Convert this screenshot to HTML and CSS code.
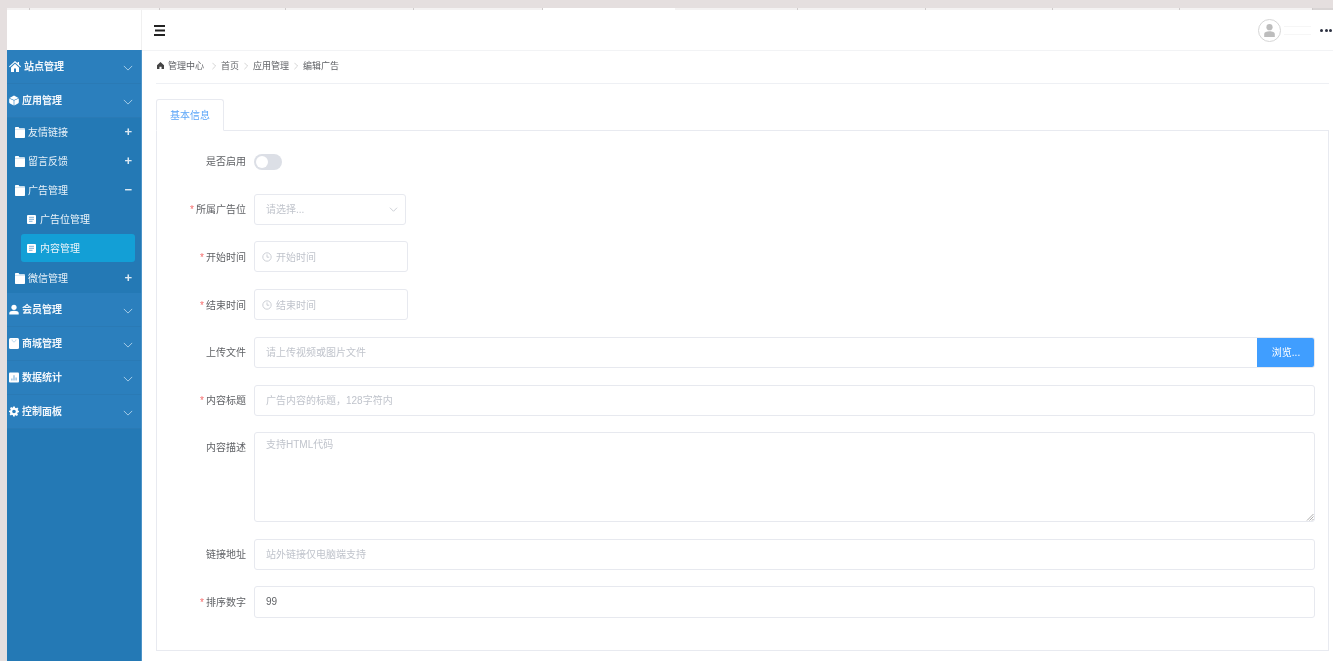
FILE: index.html
```html
<!DOCTYPE html>
<html lang="zh-CN">
<head>
<meta charset="utf-8">
<title>编辑广告</title>
<link rel="stylesheet" href="styles.css">
</head>
<body>
<svg class="defs" width="0" height="0" aria-hidden="true">
  <symbol id="i-chev" viewBox="0 0 12 7"><path d="M1 1l5 5 5-5" fill="none" stroke="currentColor" stroke-width="1.200"/></symbol>
  <symbol id="i-folder" viewBox="0 0 10 11"><path d="M0 1C0 .4.4 0 1 0h2.600l.8 1.300H9c.6 0 1 .4 1 1V10c0 .6-.4 1-1 1H1c-.6 0-1-.4-1-1z" fill="#fff"/><path d="M0 2.400h10" stroke="#8fbcdc" stroke-width=".4"/></symbol>
  <symbol id="i-doc" viewBox="0 0 9 9"><rect width="9" height="9" rx="1" fill="#fff"/><path d="M2 2.300h5M2 4.300h5M2 6.300h3.500" stroke="#6ea8d2" stroke-width=".9"/></symbol>
  <symbol id="i-clock" viewBox="0 0 10 10"><circle cx="5" cy="5" r="4.200" fill="none" stroke="currentColor" stroke-width=".8"/><path d="M5 2.400V5.200H7.200" fill="none" stroke="currentColor" stroke-width=".8"/></symbol>
</svg>

<div class="tabstrip">
  <span class="strip-tab s0"></span><span class="strip-tab s1"></span><span class="strip-tab s2"></span><span class="strip-tab s3"></span>
  <span class="strip-tab s4"></span><span class="strip-tab strip-active"></span><span class="strip-tab s6"></span>
  <span class="strip-tab s7"></span><span class="strip-tab s8"></span><span class="strip-tab s9"></span>
  <span class="strip-tab s10"></span><span class="strip-tab s11"></span>
</div>

<div class="app">
  <aside class="sidebar">
    <div class="logo"></div>
    <nav class="menu">
      <a class="top-item">
        <svg class="top-icon home-icon" viewBox="0 0 12 11"><path d="M6 0L0 5.400l.7.8L6 1.500l5.300 4.700.7-.8-2-1.800V1H8.600v1.200zM2 6.400V11h3V7.600h2V11h3V6.400L6 2.800z" fill="#fff"/></svg>
        <span class="top-label">站点管理</span>
        <svg class="chev"><use href="#i-chev"/></svg>
      </a>
      <a class="top-item">
        <svg class="top-icon" viewBox="0 0 10 10"><path d="M5 0l4.500 2.400L5 4.600.5 2.400zM.2 3l4.500 2.100V10L1 8c-.5-.3-.8-.6-.8-1.200zM9.800 3L5.300 5.100V10L9 8c.5-.3.8-.6.8-1.200z" fill="#fff"/></svg>
        <span class="top-label">应用管理</span>
        <svg class="chev"><use href="#i-chev"/></svg>
      </a>
      <div class="submenu">
        <a class="sub-item"><svg class="folder"><use href="#i-folder"/></svg><span class="sub-label">友情链接</span><span class="sign">+</span></a>
        <a class="sub-item"><svg class="folder"><use href="#i-folder"/></svg><span class="sub-label">留言反馈</span><span class="sign">+</span></a>
        <a class="sub-item"><svg class="folder"><use href="#i-folder"/></svg><span class="sub-label">广告管理</span><span class="sign">−</span></a>
        <a class="leaf-item"><svg class="doc"><use href="#i-doc"/></svg><span class="leaf-label">广告位管理</span></a>
        <a class="leaf-item current"><svg class="doc"><use href="#i-doc"/></svg><span class="leaf-label">内容管理</span></a>
        <a class="sub-item"><svg class="folder"><use href="#i-folder"/></svg><span class="sub-label">微信管理</span><span class="sign">+</span></a>
      </div>
      <a class="top-item">
        <svg class="top-icon" viewBox="0 0 10 10"><circle cx="5" cy="2.800" r="2.600" fill="#fff"/><path d="M.3 10V8.400c0-1.400 1.900-2.200 4.700-2.200s4.700.8 4.700 2.200V10z" fill="#fff"/></svg>
        <span class="top-label">会员管理</span>
        <svg class="chev"><use href="#i-chev"/></svg>
      </a>
      <a class="top-item">
        <svg class="top-icon" viewBox="0 0 10 11"><rect width="10" height="11" rx="1.500" fill="#fff"/><path d="M3 1.500c.3 1.600 1 2.300 2 2.300s1.700-.7 2-2.300" fill="none" stroke="#9cc4e2" stroke-width=".7"/></svg>
        <span class="top-label">商城管理</span>
        <svg class="chev"><use href="#i-chev"/></svg>
      </a>
      <a class="top-item">
        <svg class="top-icon" viewBox="0 0 10 10"><rect width="10" height="10" rx="1" fill="#fff"/><path d="M2.300 6h1.200v2H2.300zM4.400 2.800h1.200V8H4.400zM6.500 5h1.200v3H6.500z" fill="#86b7dc"/></svg>
        <span class="top-label">数据统计</span>
        <svg class="chev"><use href="#i-chev"/></svg>
      </a>
      <a class="top-item">
        <svg class="top-icon" viewBox="0 0 12 12"><path d="M5 0h2l.3 1.600 1.200.5L9.900 1.200l1.400 1.400-.9 1.400.5 1.200L12 5v2l-1.600.3-.5 1.200.9 1.400-1.400 1.400-1.400-.9-1.200.5L7 12H5l-.3-1.600-1.200-.5-1.400.9L.7 9.400l.9-1.400-.5-1.200L0 6.500V5l1.600-.3.500-1.200-.9-1.400L2.600.7 4 1.600l.7-.3zM6 3.800a2.200 2.200 0 100 4.400 2.200 2.200 0 000-4.400z" fill="#fff" fill-rule="evenodd"/></svg>
        <span class="top-label">控制面板</span>
        <svg class="chev"><use href="#i-chev"/></svg>
      </a>
    </nav>
  </aside>

  <div class="main">
    <header class="topbar">
      <svg class="hamburger" viewBox="0 0 11 11"><path d="M0 1h11M1 5.500h10M0 10h11" stroke="#222" stroke-width="1.800"/></svg>
      <div class="userbox">
        <span class="avatar"><svg viewBox="0 0 11 13"><circle cx="5.500" cy="3.200" r="3.100" fill="#bdbdbd"/><path d="M.2 13v-3c0-1.800 2.200-2.800 5.300-2.800s5.300 1 5.300 2.800v3z" fill="#bdbdbd"/></svg></span>
        <span class="username"></span>
        <span class="dots"><i></i><i></i><i></i></span>
      </div>
    </header>

    <div class="content">
      <div class="breadcrumb">
        <svg class="home" viewBox="0 0 8 8"><path d="M4 0L0 3.800V8h2.800V5.400h2.400V8H8V3.800z" fill="#444"/></svg>
        <span>管理中心</span><svg class="crumb-sep first" viewBox="0 0 5 9"><path d="M.5.500l4 4-4 4" fill="none" stroke="#bbb" stroke-width=".8"/></svg>
        <span>首页</span><svg class="crumb-sep" viewBox="0 0 5 9"><path d="M.5.500l4 4-4 4" fill="none" stroke="#bbb" stroke-width=".8"/></svg>
        <span>应用管理</span><svg class="crumb-sep" viewBox="0 0 5 9"><path d="M.5.500l4 4-4 4" fill="none" stroke="#bbb" stroke-width=".8"/></svg>
        <span>编辑广告</span>
      </div>

      <div class="tabs"><div class="tab">基本信息</div></div>

      <form class="panel">
        <div class="row row-switch">
          <label class="lbl">是否启用</label>
          <span class="switch"><i></i></span>
        </div>
        <div class="row row-select">
          <label class="lbl"><b>*</b>所属广告位</label>
          <div class="field select"><span class="ph">请选择...</span><svg class="select-chev"><use href="#i-chev"/></svg></div>
        </div>
        <div class="row row-date">
          <label class="lbl"><b>*</b>开始时间</label>
          <div class="field date"><svg class="clock"><use href="#i-clock"/></svg><span class="ph">开始时间</span></div>
        </div>
        <div class="row row-date">
          <label class="lbl"><b>*</b>结束时间</label>
          <div class="field date"><svg class="clock"><use href="#i-clock"/></svg><span class="ph">结束时间</span></div>
        </div>
        <div class="row row-file">
          <label class="lbl">上传文件</label>
          <div class="field wide file"><span class="ph">请上传视频或图片文件</span><span class="browse">浏览...</span></div>
        </div>
        <div class="row row-title">
          <label class="lbl"><b>*</b>内容标题</label>
          <div class="field wide"><span class="ph">广告内容的标题，128字符内</span></div>
        </div>
        <div class="row row-area">
          <label class="lbl area-lbl">内容描述</label>
          <div class="field wide area"><span class="ph">支持HTML代码</span>
            <svg class="grip" viewBox="0 0 8 8"><path d="M7.500 1L1 7.500M7.500 3.500L3.500 7.500M7.500 6L6 7.500" stroke="#888" stroke-width=".7"/></svg>
          </div>
        </div>
        <div class="row row-link">
          <label class="lbl">链接地址</label>
          <div class="field wide"><span class="ph">站外链接仅电脑端支持</span></div>
        </div>
        <div class="row row-sort">
          <label class="lbl"><b>*</b>排序数字</label>
          <div class="field wide sort"><span class="val">99</span></div>
        </div>
      </form>
    </div>
  </div>
</div>
</body>
</html>
```
FILE: styles.css
```css
* { box-sizing: border-box; }
html, body { margin: 0; padding: 0; height: 100%; overflow: hidden; }
body {
  background: #e5dfdf;
  font-family: "Liberation Sans", "Noto Sans CJK SC", sans-serif;
  font-size: 10px;
  color: #606266;
  display: flex;
  flex-direction: column;
}
.defs { position: absolute; }

/* strip of browser tabs at the very top */
.tabstrip { height: 10px; flex: none; display: flex; align-items: flex-end; padding-left: 7px; }
.strip-tab { height: 2px; background: #f4f2f2; border-right: 1px solid #cfcbcb; flex: none; }
.s0 { width: 23px; }
.s1 { width: 130px; }
.s2 { width: 126px; }
.s3 { width: 128px; }
.s4 { width: 129px; }
.strip-active { width: 132px; background: #fff; border-right: 0; }
.s6 { width: 123px; }
.s7 { width: 128px; }
.s8 { width: 127px; }
.s9 { width: 127px; }
.s10 { width: 133px; }
.s11 { flex: 1; background: #d9d5d5; border-right: 0; }

.app { flex: 1; min-height: 0; display: flex; margin-left: 7px; filter: blur(.5px); }

/* sidebar */
.sidebar { width: 135px; flex: none; display: flex; flex-direction: column; background: #2479b5; }
.logo { height: 40px; flex: none; background: #fff; border-right: 1px solid #f0f0f0; }
.menu { flex: 1; display: flex; flex-direction: column; color: #fff; border-right: 1px solid #4d94c8; }
.top-item { height: 34px; flex: none; display: flex; align-items: center; padding: 0 8px 0 2px; background: #2b7fbd; border-bottom: 1px solid #2a7ab5; font-weight: 700; color: #f1f6fb; }
.top-icon { width: 10px; height: 11px; flex: none; }
.top-icon.home-icon { width: 12px; }
.top-label { margin-left: 3px; flex: 1; padding-bottom: 2px; }
.chev { width: 10px; height: 6px; color: #a3cbe7; flex: none; margin-top: 3px; }
.submenu { display: flex; flex-direction: column; background: #2479b5; }
.sub-item { height: 29px; flex: none; display: flex; align-items: center; padding: 0 9px 0 8px; color: #e9f2f9; }
.folder { width: 10px; height: 11px; flex: none; }
.sub-label { margin-left: 3px; flex: 1; padding-bottom: 2px; }
.sign { font-size: 13px; line-height: 1; font-weight: 700; color: #dce9f3; padding-bottom: 2px; }
.leaf-item { height: 28px; flex: none; display: flex; align-items: center; gap: 4px; margin: 0 6px 1px 14px; padding-left: 6px; border-radius: 3px; color: #eef5fa; }
.leaf-item.current { background: #139fd6; margin-bottom: 2px; }
.leaf-label { padding-bottom: 2px; }
.doc { width: 9px; height: 9px; flex: none; }

/* top bar */
.main { flex: 1; min-width: 0; display: flex; flex-direction: column; background: #fff; }
.topbar { height: 41px; flex: none; display: flex; align-items: center; justify-content: space-between; padding: 0 1px 0 12px; border-bottom: 1px solid #f2f3f5; }
.hamburger { width: 11px; height: 11px; }
.userbox { display: flex; align-items: center; }
.avatar { width: 23px; height: 23px; border: 1px solid #d6d6d6; border-radius: 50%; display: flex; align-items: center; justify-content: center; }
.avatar svg { width: 11px; height: 13px; }
.username { width: 27px; margin-left: 3px; margin-right: 9px; height: 9px; border-top: 1px solid #f6f6f6; border-bottom: 1px solid #f6f6f6; }
.dots { display: flex; gap: 1.500px; }
.dots i { width: 3px; height: 3px; border-radius: 50%; background: #2c3140; }

/* content */
.content { flex: 1; min-height: 0; padding: 0 4px 0 14px; display: flex; flex-direction: column; }
.breadcrumb { height: 33px; flex: none; display: flex; align-items: center; padding: 0 0 3px 1px; border-bottom: 1px solid #eef0f4; font-size: 9px; color: #606266; }
.home { width: 7px; height: 7px; margin-right: 4px; }
.crumb-sep { width: 4px; height: 8px; margin: 0 5px; }
.crumb-sep.first { margin-left: 8px; }
.tabs { margin-top: 15px; height: 32px; flex: none; display: flex; margin-bottom: -1px; position: relative; z-index: 1; }
.tab { width: 68px; height: 32px; padding-bottom: 2px; background: #fff; border: 1px solid #e8eaf0; border-bottom-color: #fff; border-radius: 3px 3px 0 0; display: flex; align-items: center; justify-content: center; color: #5aa5f8; }

.panel { height: 521px; flex: none; border: 1px solid #e8eaf0; padding: 0 13px 0 0; display: flex; flex-direction: column; }
.row { display: flex; align-items: center; flex: none; }
.lbl { width: 89px; margin-right: 8px; padding-bottom: 2px; flex: none; text-align: right; color: #606266; }
.lbl b { color: #f56c6c; font-weight: 400; margin-right: 2px; }
.row-switch { margin-top: 23px; height: 16px; }
.row-switch .lbl { padding-bottom: 4px; }
.row-select { margin-top: 24px; }
.row-date { margin-top: 16px; }
.row-date .lbl { padding-bottom: 0; }
.row-date + .row-date { margin-top: 17px; }
.row-file { margin-top: 17px; }
.row-title { margin-top: 17px; }
.row-area { margin-top: 16px; align-items: flex-start; }
.row-link { margin-top: 17px; }
.row-sort { margin-top: 16px; }
.area-lbl { padding-top: 7px; }

.switch { width: 28px; height: 16px; border-radius: 8px; background: #dcdfe6; padding: 2px; display: flex; }
.switch i { width: 12px; height: 12px; border-radius: 50%; background: #fff; }

.field { height: 31px; border: 1px solid #e7e9ef; border-radius: 3px; background: #fff; display: flex; align-items: center; padding: 0 11px; }
.select { width: 152px; justify-content: space-between; padding-right: 7px; }
.select-chev { width: 9px; height: 5px; color: #c4c8cf; }
.date { width: 154px; padding-left: 7px; gap: 4px; }
.date .ph { padding-bottom: 0; }
.clock { width: 10px; height: 10px; color: #c0c4cc; flex: none; }
.wide { flex: 1; min-width: 0; }
.ph, .val { padding-bottom: 2px; }
.ph { color: #c0c4cc; }
.val { color: #606266; }
.file { padding-right: 0; justify-content: space-between; overflow: hidden; }
.browse { width: 58px; height: 31px; padding-bottom: 2px; margin-right: -1px; background: #409eff; color: #fff; display: flex; align-items: center; justify-content: center; border-radius: 0 3px 3px 0; flex: none; }
.area { height: 90px; align-items: flex-start; padding-top: 3px; position: relative; }
.grip { position: absolute; right: 0; bottom: 0; width: 8px; height: 8px; }
.sort { height: 32px; }
```
